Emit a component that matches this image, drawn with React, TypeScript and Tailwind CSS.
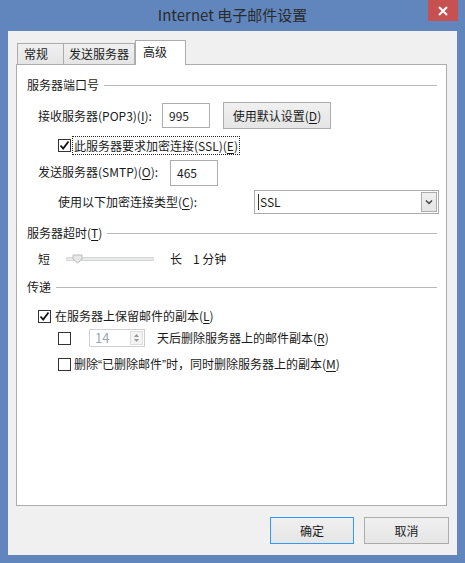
const font = "font-['Microsoft_YaHei','Noto_Sans_CJK_SC',sans-serif]";

const GroupHeader = ({ label, lineFrom }: { label: React.ReactNode; lineFrom: number }) => (
  <div className="flex h-[20px] items-center pl-[10px] pr-[9px]">
    <span className="shrink-0">{label}</span>
    <span className="h-px flex-1 bg-[#b9b9b9]" style={{ marginLeft: lineFrom }} />
  </div>
);

const Check = ({ checked }: { checked?: boolean }) => (
  <span className="flex h-[13px] w-[13px] shrink-0 items-center justify-center border border-[#333] bg-white">
    {checked && (
      <svg width="11" height="11" viewBox="0 0 11 11">
        <path d="M1.5 5.5 L4.2 8.5 L9.5 1.5" fill="none" stroke="#111" strokeWidth="1.8" />
      </svg>
    )}
  </span>
);

const U = ({ children }: { children: React.ReactNode }) => <span className="underline underline-offset-2">{children}</span>;

// narrow latin quotes like the original dialog font
const Q = ({ children }: { children: React.ReactNode }) => <span className="font-['Liberation_Sans',sans-serif]">{children}</span>;

export default function App() {
  return (
    <div className={`${font} h-[563px] w-[465px] bg-[#6186be] px-[8px] pb-[8px] text-[12px] text-[#1a1a1a]`}>
      <div className="relative flex h-[31px] items-center justify-center">
        <span className="pb-[1px] text-[15px] text-[#2a2a2a]">Internet 电子邮件设置</span>
        <button className="absolute right-[-1px] top-0 flex h-[21px] w-[30px] items-center justify-center bg-[#c75050]">
          <svg width="10" height="10" viewBox="0 0 10 10">
            <path d="M1 1 L9 9 M9 1 L1 9" stroke="#fff" strokeWidth="2" />
          </svg>
        </button>
      </div>

      <div className="flex h-[524px] flex-col bg-[#f0f0f0] pl-[8px] pr-[10px] pt-[9px]">
        <div className="flex h-[24px] items-end pl-[1px]">
          <div className="flex h-[21px] w-[47px] items-center border border-b-0 border-[#acacac] bg-gradient-to-b from-[#f0f0f0] to-[#e5e5e5] pl-[6px]">常规</div>
          <div className="flex h-[21px] w-[71px] items-center border border-b-0 border-l-0 border-[#acacac] bg-gradient-to-b from-[#f0f0f0] to-[#e5e5e5] pl-[5px]">发送服务器</div>
          <div className="relative z-10 mb-[-1px] flex h-[25px] w-[51px] items-start border border-b-0 border-[#acacac] bg-white pl-[7px] pt-[2px]">高级</div>
        </div>

        <div className="flex h-[442px] flex-col border border-[#acacac] bg-white pt-[10px]">
          <GroupHeader label="服务器端口号" lineFrom={5} />

          <div className="mt-[7px] flex h-[27px] items-center pl-[21px]">
            <span className="w-[124px]">接收服务器(POP3)(<U>I</U>):</span>
            <div className="flex h-[25px] w-[48px] items-center border border-[#acacac] pl-[6px]">995</div>
            <button className="ml-[13px] flex h-[27px] w-[108px] items-center justify-center border border-[#acacac] bg-gradient-to-b from-[#f0f0f0] to-[#e5e5e5]">
              使用默认设置(<U>D</U>)
            </button>
          </div>

          <div className="mt-[7px] flex h-[19px] items-center pl-[41px]">
            <Check checked />
            <span className="ml-[1px] border border-dotted border-[#222] px-[1px] leading-[17px]">此服务器要求加密连接(SSL)(<U>E</U>)</span>
          </div>

          <div className="mt-[5px] flex h-[26px] items-center pl-[21px]">
            <span className="w-[132px] pb-[2px]">发送服务器(SMTP)(<U>O</U>):</span>
            <div className="flex h-[26px] w-[48px] items-center border border-[#acacac] pl-[6px]">465</div>
          </div>

          <div className="mt-[4px] flex h-[24px] items-center pl-[41px]">
            <span className="w-[196px]">使用以下加密连接类型(<U>C</U>):</span>
            <div className="flex h-[24px] w-[185px] items-center border border-[#acacac] pl-[3px]">
              <span className="flex-1 border-l border-[#333] pl-[1px] leading-[16px]">SSL</span>
              <span className="mr-[1px] flex h-[20px] w-[16px] items-center justify-center border border-[#acacac] bg-gradient-to-b from-[#f0f0f0] to-[#e5e5e5]">
                <svg width="8" height="6" viewBox="0 0 8 6">
                  <path d="M1 1.5 L4 4.5 L7 1.5" fill="none" stroke="#444" strokeWidth="1.5" />
                </svg>
              </span>
            </div>
          </div>

          <div className="mt-[9px]">
            <GroupHeader label={<>服务器超时(<U>T</U>)</>} lineFrom={5} />
          </div>

          <div className="mt-[6px] flex h-[20px] items-center pl-[21px]">
            <span className="w-[28px]">短</span>
            <div className="relative flex h-[20px] w-[88px] items-center">
              <span className="h-[4px] w-full rounded-[1px] border border-[#d6d6d6] bg-[#e7eaea]" />
              <svg className="absolute left-[6px] top-[5px]" width="11" height="10" viewBox="0 0 11 10">
                <path d="M1 1 H10 V5 L5.5 9 L1 5 Z" fill="#e8e8e8" stroke="#bcbcbc" />
              </svg>
            </div>
            <span className="ml-[16px]">长</span>
            <span className="ml-[11px]">1 分钟</span>
          </div>

          <div className="mt-[8px]">
            <GroupHeader label="传递" lineFrom={5} />
          </div>

          <div className="mt-[9px] flex h-[20px] items-center pl-[21px]">
            <Check checked />
            <span className="ml-[4px]">在服务器上保留邮件的副本(<U>L</U>)</span>
          </div>

          <div className="mt-[2px] flex h-[20px] items-center pl-[41px]">
            <Check />
            <div className="ml-[18px] flex h-[18px] w-[56px] items-center border border-[#cfcfcf] pl-[5px] text-[#9aa7b3]">
              <span className="flex-1 text-[13px] leading-[16px]">14</span>
              <span className="mr-[1px] flex h-[14px] w-[13px] flex-col items-center justify-center gap-[2px] border border-[#dedede] bg-[#f4f4f4]">
                <svg width="5" height="3" viewBox="0 0 5 3"><path d="M0 3 L2.5 0 L5 3 Z" fill="#999" /></svg>
                <svg width="5" height="3" viewBox="0 0 5 3"><path d="M0 0 L2.5 3 L5 0 Z" fill="#999" /></svg>
              </span>
            </div>
            <span className="ml-[12px]">天后删除服务器上的邮件副本(<U>R</U>)</span>
          </div>

          <div className="mt-[6px] flex h-[20px] items-center pl-[41px]">
            <Check />
            <span className="ml-[3px]">
              删除<Q>“</Q>已删除邮件<Q>”</Q>时，同时删除服务器上的副本(<U>M</U>)
            </span>
          </div>
        </div>

        <div className="mt-[11px] flex justify-end gap-[10px]">
          <button className="flex h-[27px] w-[84px] items-center justify-center border border-[#3399ff] bg-gradient-to-b from-[#f0f0f0] to-[#e5e5e5]">确定</button>
          <button className="mr-[-2px] flex h-[27px] w-[85px] items-center justify-center border border-[#acacac] bg-gradient-to-b from-[#f0f0f0] to-[#e5e5e5]">取消</button>
        </div>
      </div>
    </div>
  );
}
